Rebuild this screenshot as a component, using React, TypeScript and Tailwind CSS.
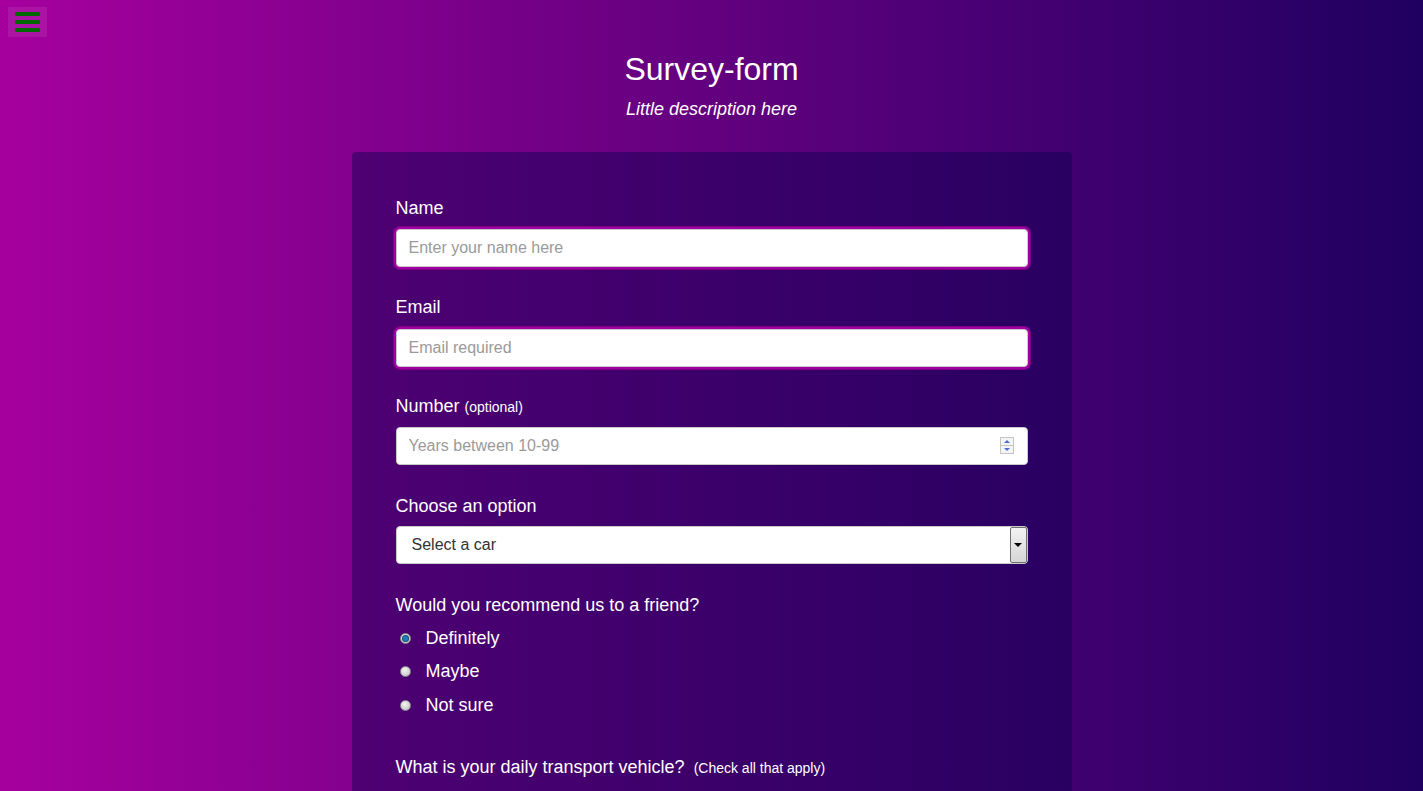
import React from "react";

function Radio({ checked, label }: { checked?: boolean; label: string }) {
  return (
    <div className="flex h-[33px] items-center">
      <span className="ml-[4px] flex h-[11px] w-[11px] items-center justify-center rounded-full border border-[#8f8f8f] bg-[radial-gradient(circle_at_40%_35%,#f4f4f4,#bdbdbd)]">
        {checked && <span className="h-[5px] w-[5px] rounded-full bg-[#1c7fb8] shadow-[0_0_0_1px_#0f4f78]" />}
      </span>
      <span className="ml-[15px] text-[18px] leading-[21px] text-white">{label}</span>
    </div>
  );
}

export default function App() {
  return (
    <div
      className="min-h-[791px] w-full bg-[linear-gradient(to_right,#a6009e,#1f0060)] text-white"
      style={{ fontFamily: '"Liberation Sans", Arial, sans-serif' }}
    >
      <div className="relative">
        <div className="absolute left-[8px] top-[7px] flex h-[30px] w-[39px] flex-col items-center justify-center gap-[4px] bg-[rgba(255,255,255,0.08)]">
          <span className="h-[4px] w-[25px] rounded-[1px] bg-[#006a00]" />
          <span className="h-[4px] w-[25px] rounded-[1px] bg-[#006a00]" />
          <span className="h-[4px] w-[25px] rounded-[1px] bg-[#006a00]" />
        </div>
      </div>

      <header className="flex flex-col items-center pt-[50px]">
        <h1 className="text-[32px] leading-[38px] text-white">Survey-form</h1>
        <p className="mt-[11px] text-[18px] italic leading-[21px] text-white">Little description here</p>
      </header>

      <div className="mx-auto mt-[32px] w-[720px] rounded-[4px] bg-[rgba(14,0,82,0.45)] px-[44px] pt-[46px] pb-[40px]">
        <div className="mb-[30px]">
          <label className="mb-[10px] block h-[21px] text-[18px] leading-[21px]">Name</label>
          <input
            type="text"
            placeholder="Enter your name here"
            className="block h-[38px] w-full rounded-[4px] border border-[#c9c9c9] bg-white px-[12px] text-[16px] text-[#333] shadow-[0_0_0_2px_#a000a4,0_0_0_3px_#7c0080] outline-none placeholder:text-[#9a9a9a]"
          />
        </div>

        <div className="mb-[29px]">
          <label className="mb-[11px] block h-[21px] text-[18px] leading-[21px]">Email</label>
          <input
            type="text"
            placeholder="Email required"
            className="block h-[38px] w-full rounded-[4px] border border-[#c9c9c9] bg-white px-[12px] text-[16px] text-[#333] shadow-[0_0_0_2px_#a000a4,0_0_0_3px_#7c0080] outline-none placeholder:text-[#9a9a9a]"
          />
        </div>

        <div className="mb-[31px]">
          <label className="mb-[10px] block h-[21px] text-[18px] leading-[21px]">
            Number <span className="text-[14px]">(optional)</span>
          </label>
          <div className="relative">
            <input
              type="text"
              placeholder="Years between 10-99"
              className="block h-[38px] w-full rounded-[4px] border border-[#c9c9c9] bg-white px-[12px] text-[16px] text-[#333] outline-none placeholder:text-[#9a9a9a]"
            />
            <div className="absolute right-[14px] top-[10px] flex h-[17px] w-[14px] flex-col border border-[#c4c4c4] bg-[#f4f4f4]">
              <div className="flex h-1/2 items-center justify-center border-b border-[#c4c4c4]">
                <span className="h-0 w-0 border-x-[3px] border-b-[3px] border-x-transparent border-b-[#4a6cd4]" />
              </div>
              <div className="flex h-1/2 items-center justify-center">
                <span className="h-0 w-0 border-x-[3px] border-t-[3px] border-x-transparent border-t-[#4a6cd4]" />
              </div>
            </div>
          </div>
        </div>

        <div className="mb-[31px]">
          <label className="mb-[9px] block h-[21px] text-[18px] leading-[21px]">Choose an option</label>
          <div className="relative">
            <select className="block h-[38px] w-full appearance-none rounded-[4px] border border-[#c9c9c9] bg-white pl-[15px] text-[16px] text-[#333] outline-none">
              <option>Select a car</option>
            </select>
            <div className="pointer-events-none absolute right-[1px] top-[1px] flex h-[36px] w-[17px] items-center justify-center rounded-[2px] border border-[#707070] bg-[linear-gradient(#f2f2f2,#d6d6d6)]">
              <span className="h-0 w-0 border-x-[4px] border-t-[4px] border-x-transparent border-t-black" />
            </div>
          </div>
        </div>

        <div>
          <p className="mb-[6px] h-[21px] text-[18px] leading-[21px]">Would you recommend us to a friend?</p>
          <Radio checked label="Definitely" />
          <Radio label="Maybe" />
          <div className="pt-[1px]">
            <Radio label="Not sure" />
          </div>
        </div>

        <div className="mt-[35px]">
          <p className="h-[21px] text-[18px] leading-[21px]">
            What is your daily transport vehicle?
            <span className="ml-[9px] text-[14px]">(Check all that apply)</span>
          </p>
        </div>
        <div className="h-[60px]" />
      </div>
    </div>
  );
}
